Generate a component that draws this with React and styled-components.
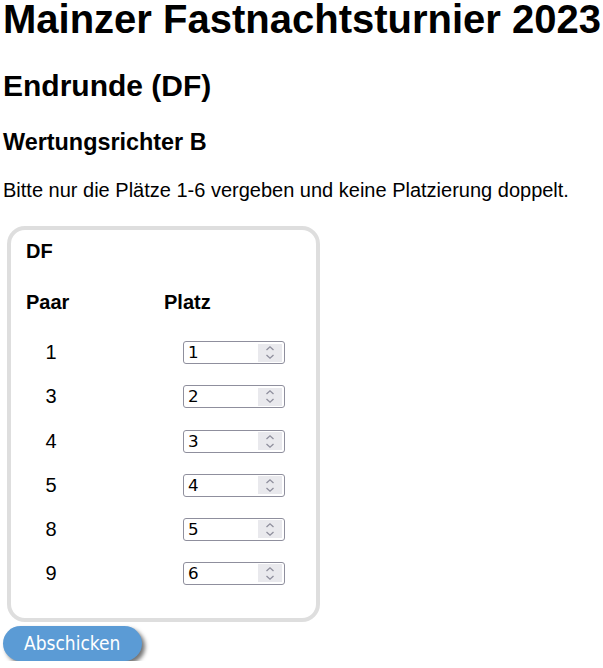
import React from "react";
import styled, { createGlobalStyle } from "styled-components";

const GlobalStyle = createGlobalStyle`
  html, body {
    margin: 0;
    padding: 0;
    background: #ffffff;
  }
  body {
    font-family: "Liberation Sans", Arial, sans-serif;
    color: #000000;
  }
`;

const Page = styled.div`
  padding: 0 3px;
`;

const Title = styled.h1`
  font-size: 40px;
  font-weight: bold;
  line-height: 46px;
  margin: -3.6px 0 26.8px;
  white-space: nowrap;
`;

const Round = styled.h2`
  font-size: 30px;
  font-weight: bold;
  line-height: 34.5px;
  margin: 0 0 24.9px;
`;

const Judge = styled.h3`
  font-size: 23.4px;
  font-weight: bold;
  line-height: 26.9px;
  margin: 0 0 23.4px;
`;

const Hint = styled.p`
  font-size: 20px;
  line-height: 23px;
  margin: 0 0 24.3px;
`;

const Panel = styled.div`
  box-sizing: border-box;
  width: 313px;
  margin-left: 4px;
  border: 4px solid #dedede;
  border-radius: 18px;
  padding: 9.5px 0 22.3px 15px;
`;

const PanelTitle = styled.h4`
  font-size: 20px;
  font-weight: bold;
  line-height: 23px;
  margin: 0 0 28px;
`;

const Grid = styled.div`
  display: grid;
  grid-template-columns: 138px 1fr;
`;

const HeadCell = styled.div`
  font-size: 20px;
  font-weight: bold;
  line-height: 23px;
  margin-bottom: 17px;
`;

const Row = styled.div`
  display: contents;
`;

const CoupleCell = styled.div`
  height: 44.14px;
  display: flex;
  align-items: center;
  font-size: 20px;
  line-height: 23px;
`;

const CoupleNo = styled.span`
  width: 50px;
  text-align: center;
`;

const PlaceCell = styled.div`
  height: 44.14px;
  display: flex;
  align-items: center;
  padding-left: 19px;
`;

const NumberBox = styled.label`
  box-sizing: border-box;
  width: 102px;
  height: 23px;
  display: flex;
  align-items: center;
  border: 1px solid #8f8f9d;
  border-radius: 3px;
  background: #ffffff;
`;

const NumberField = styled.input`
  flex: 1;
  min-width: 0;
  border: none;
  outline: none;
  background: transparent;
  padding: 0 0 0 4px;
  font-family: "DejaVu Sans", sans-serif;
  font-size: 16.67px;
  color: #000000;
  height: 21px;
`;

const Spinner = styled.span`
  width: 24px;
  height: 18px;
  margin-right: 2px;
  background: #e9e9ed;
  display: flex;
  align-items: center;
  justify-content: center;
`;

const SubmitButton = styled.button`
  margin-top: 4px;
  height: 35.5px;
  padding: 0 22px 0 21px;
  border: none;
  border-radius: 18px;
  background: #5b9bd5;
  color: #ffffff;
  font-family: "DejaVu Sans Condensed", "DejaVu Sans", sans-serif;
  font-stretch: condensed;
  font-size: 19px;
  box-shadow: 3px 3px 4px rgba(0, 0, 0, 0.55);
  cursor: pointer;
`;

function SpinIcon() {
  return (
    <svg width="10" height="15" viewBox="0 0 10 15" fill="none">
      <path d="M1.5 5L5 1.8L8.5 5" stroke="#8f8f9d" strokeWidth="1.3" />
      <path d="M1.5 10L5 13.2L8.5 10" stroke="#8f8f9d" strokeWidth="1.3" />
    </svg>
  );
}

const couples = [
  { paar: 1, platz: 1 },
  { paar: 3, platz: 2 },
  { paar: 4, platz: 3 },
  { paar: 5, platz: 4 },
  { paar: 8, platz: 5 },
  { paar: 9, platz: 6 },
];

export default function App() {
  return (
    <>
      <GlobalStyle />
      <Page>
        <Title>Mainzer Fastnachtsturnier 2023</Title>
        <Round>Endrunde (DF)</Round>
        <Judge>Wertungsrichter B</Judge>
        <Hint>Bitte nur die Plätze 1-6 vergeben und keine Platzierung doppelt.</Hint>
        <Panel>
          <PanelTitle>DF</PanelTitle>
          <Grid>
            <HeadCell>Paar</HeadCell>
            <HeadCell>Platz</HeadCell>
            {couples.map(({ paar, platz }) => (
              <Row key={paar}>
                <CoupleCell>
                  <CoupleNo>{paar}</CoupleNo>
                </CoupleCell>
                <PlaceCell>
                  <NumberBox>
                    <NumberField type="text" inputMode="numeric" defaultValue={platz} />
                    <Spinner>
                      <SpinIcon />
                    </Spinner>
                  </NumberBox>
                </PlaceCell>
              </Row>
            ))}
          </Grid>
        </Panel>
        <SubmitButton type="button">Abschicken</SubmitButton>
      </Page>
    </>
  );
}
